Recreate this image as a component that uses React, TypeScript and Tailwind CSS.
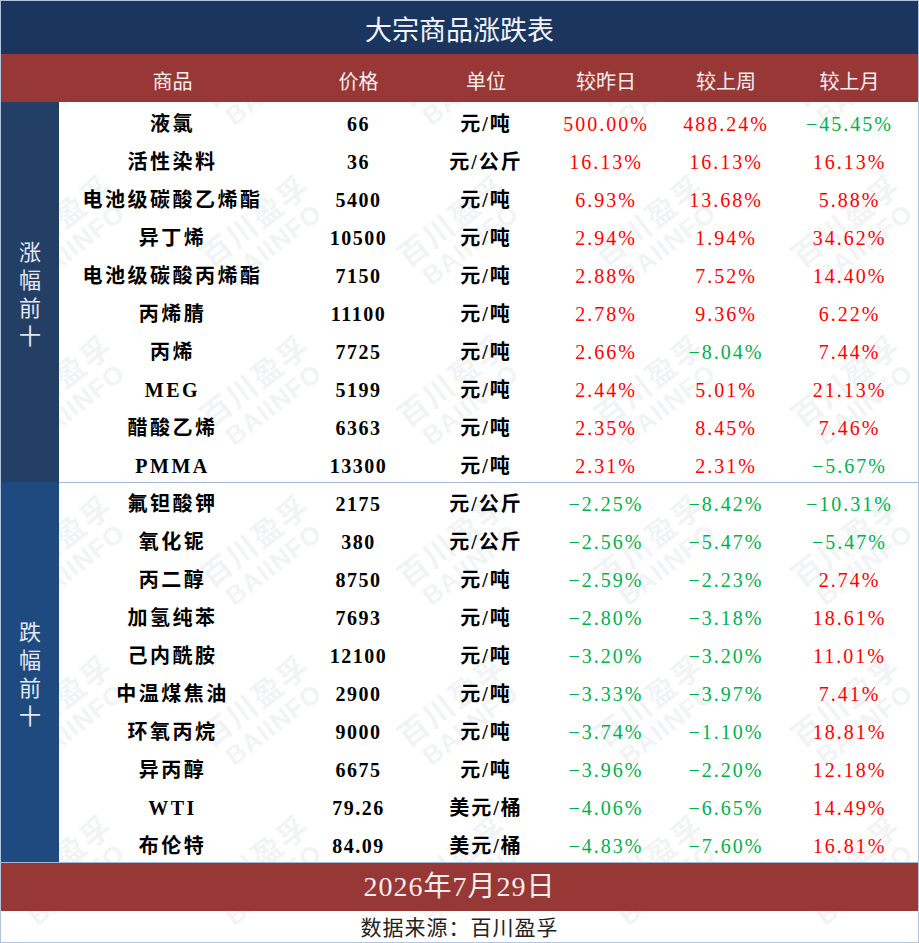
import React from "react";

type Row = [string, string, string, string, string, string];

const up: Row[] = [
  ["液氯", "66", "元/吨", "500.00%", "488.24%", "-45.45%"],
  ["活性染料", "36", "元/公斤", "16.13%", "16.13%", "16.13%"],
  ["电池级碳酸乙烯酯", "5400", "元/吨", "6.93%", "13.68%", "5.88%"],
  ["异丁烯", "10500", "元/吨", "2.94%", "1.94%", "34.62%"],
  ["电池级碳酸丙烯酯", "7150", "元/吨", "2.88%", "7.52%", "14.40%"],
  ["丙烯腈", "11100", "元/吨", "2.78%", "9.36%", "6.22%"],
  ["丙烯", "7725", "元/吨", "2.66%", "-8.04%", "7.44%"],
  ["MEG", "5199", "元/吨", "2.44%", "5.01%", "21.13%"],
  ["醋酸乙烯", "6363", "元/吨", "2.35%", "8.45%", "7.46%"],
  ["PMMA", "13300", "元/吨", "2.31%", "2.31%", "-5.67%"],
];

const down: Row[] = [
  ["氟钽酸钾", "2175", "元/公斤", "-2.25%", "-8.42%", "-10.31%"],
  ["氧化铌", "380", "元/公斤", "-2.56%", "-5.47%", "-5.47%"],
  ["丙二醇", "8750", "元/吨", "-2.59%", "-2.23%", "2.74%"],
  ["加氢纯苯", "7693", "元/吨", "-2.80%", "-3.18%", "18.61%"],
  ["己内酰胺", "12100", "元/吨", "-3.20%", "-3.20%", "11.01%"],
  ["中温煤焦油", "2900", "元/吨", "-3.33%", "-3.97%", "7.41%"],
  ["环氧丙烷", "9000", "元/吨", "-3.74%", "-1.10%", "18.81%"],
  ["异丙醇", "6675", "元/吨", "-3.96%", "-2.20%", "12.18%"],
  ["WTI", "79.26", "美元/桶", "-4.06%", "-6.65%", "14.49%"],
  ["布伦特", "84.09", "美元/桶", "-4.83%", "-7.60%", "16.81%"],
];

const SERIF = "font-['Liberation_Serif','Noto_Sans_CJK_SC',serif]";
const SANS = "font-['Noto_Sans_CJK_SC','Noto_Sans',sans-serif]";

function Pct({ v }: { v: string }) {
  const neg = v.startsWith("-");
  return (
    <div
      className={`flex items-center justify-center pt-[5px] text-[20px] tracking-[2px] ${SERIF} ${
        neg ? "text-[#00b050]" : "text-[#ff0000]"
      }`}
    >
      {neg ? "\u2212" + v.slice(1) : v}
    </div>
  );
}

function DataRow({ r }: { r: Row }) {
  return (
    <div className="grid h-[38px] grid-cols-[227px_145px_110px_130px_110px_137px]">
      <div className={`flex items-center justify-center pt-[5px] text-[20px] font-bold tracking-[2.5px] text-black ${SERIF}`}>
        {r[0]}
      </div>
      <div className={`flex items-center justify-center pt-[5px] text-[20px] font-bold tracking-[1.5px] text-black ${SERIF}`}>
        {r[1]}
      </div>
      <div className={`flex items-center justify-center pt-[5px] text-[20px] font-bold tracking-[2px] text-black ${SERIF}`}>
        {r[2]}
      </div>
      <Pct v={r[3]} />
      <Pct v={r[4]} />
      <Pct v={r[5]} />
    </div>
  );
}

function Group({ label, rows, bg, top }: { label: string; rows: Row[]; bg: string; top?: boolean }) {
  return (
    <div className="flex h-[380px]">
      <div className={`flex w-[58px] shrink-0 flex-col items-center justify-center gap-[6px] ${bg}`}>
        {label.split("").map((c, i) => (
          <span key={i} className={`block text-[22px] leading-[22px] text-[#e4e8ee] ${SANS}`}>
            {c}
          </span>
        ))}
      </div>
      <div className={`flex flex-1 flex-col ${top ? "border-t border-[#a3b8d3]" : ""}`}>
        {rows.map((r, i) => (
          <DataRow key={i} r={r} />
        ))}
      </div>
    </div>
  );
}

function Watermark() {
  return (
    <div className="flex w-[140px] -rotate-[38deg] flex-col items-center leading-none text-[rgba(150,160,172,0.13)]">
      <span className={`text-[30px] font-bold tracking-[2px] ${SANS}`}>百川盈孚</span>
      <span className="mt-[4px] font-['Liberation_Sans',sans-serif] text-[26px] font-bold tracking-[1px]">BAIINFO</span>
    </div>
  );
}

export default function App() {
  const heads = ["商品", "价格", "单位", "较昨日", "较上周", "较上月"];
  return (
    <div className="relative isolate h-[943px] w-[919px] overflow-hidden border border-[#b3c4da] bg-white">
      <div className="pointer-events-none absolute inset-0 z-0 ml-[-34px] mt-[-10px] grid grid-cols-[repeat(5,197px)] grid-rows-[repeat(6,160px)]">
        {Array.from({ length: 30 }).map((_, i) => (
          <div key={i} className="flex items-center justify-center">
            <Watermark />
          </div>
        ))}
      </div>

      <div className="relative z-10 flex flex-col">
        <div className={`flex h-[53px] items-center justify-center bg-[#1b365e] pt-[4px] text-[27px] text-[#f2f4f7] ${SANS}`}>
          大宗商品涨跌表
        </div>
        <div className="grid h-[48px] grid-cols-[58px_227px_145px_110px_130px_110px_137px] bg-[#973836]">
          <div />
          {heads.map((h) => (
            <div key={h} className={`flex items-center justify-center pt-[6px] text-[20px] text-[#f6eded] ${SANS}`}>
              {h}
            </div>
          ))}
        </div>
        <div className="flex flex-col">
          <Group label="涨幅前十" rows={up} bg="bg-[#243f66]" />
          <Group label="跌幅前十" rows={down} bg="bg-[#1f4a80]" top />
        </div>
        <div className="h-px bg-[#a3b8d3]" />
        <div className={`flex h-[48px] items-center justify-center bg-[#973836] text-[28px] tracking-[1px] text-[#f6eded] ${SERIF}`}>
          2026年7月29日
        </div>
        <div className={`flex h-[31px] items-center justify-center text-[21px] tracking-[1px] text-[#222] ${SANS}`}>
          数据来源：百川盈孚
        </div>
      </div>
    </div>
  );
}
